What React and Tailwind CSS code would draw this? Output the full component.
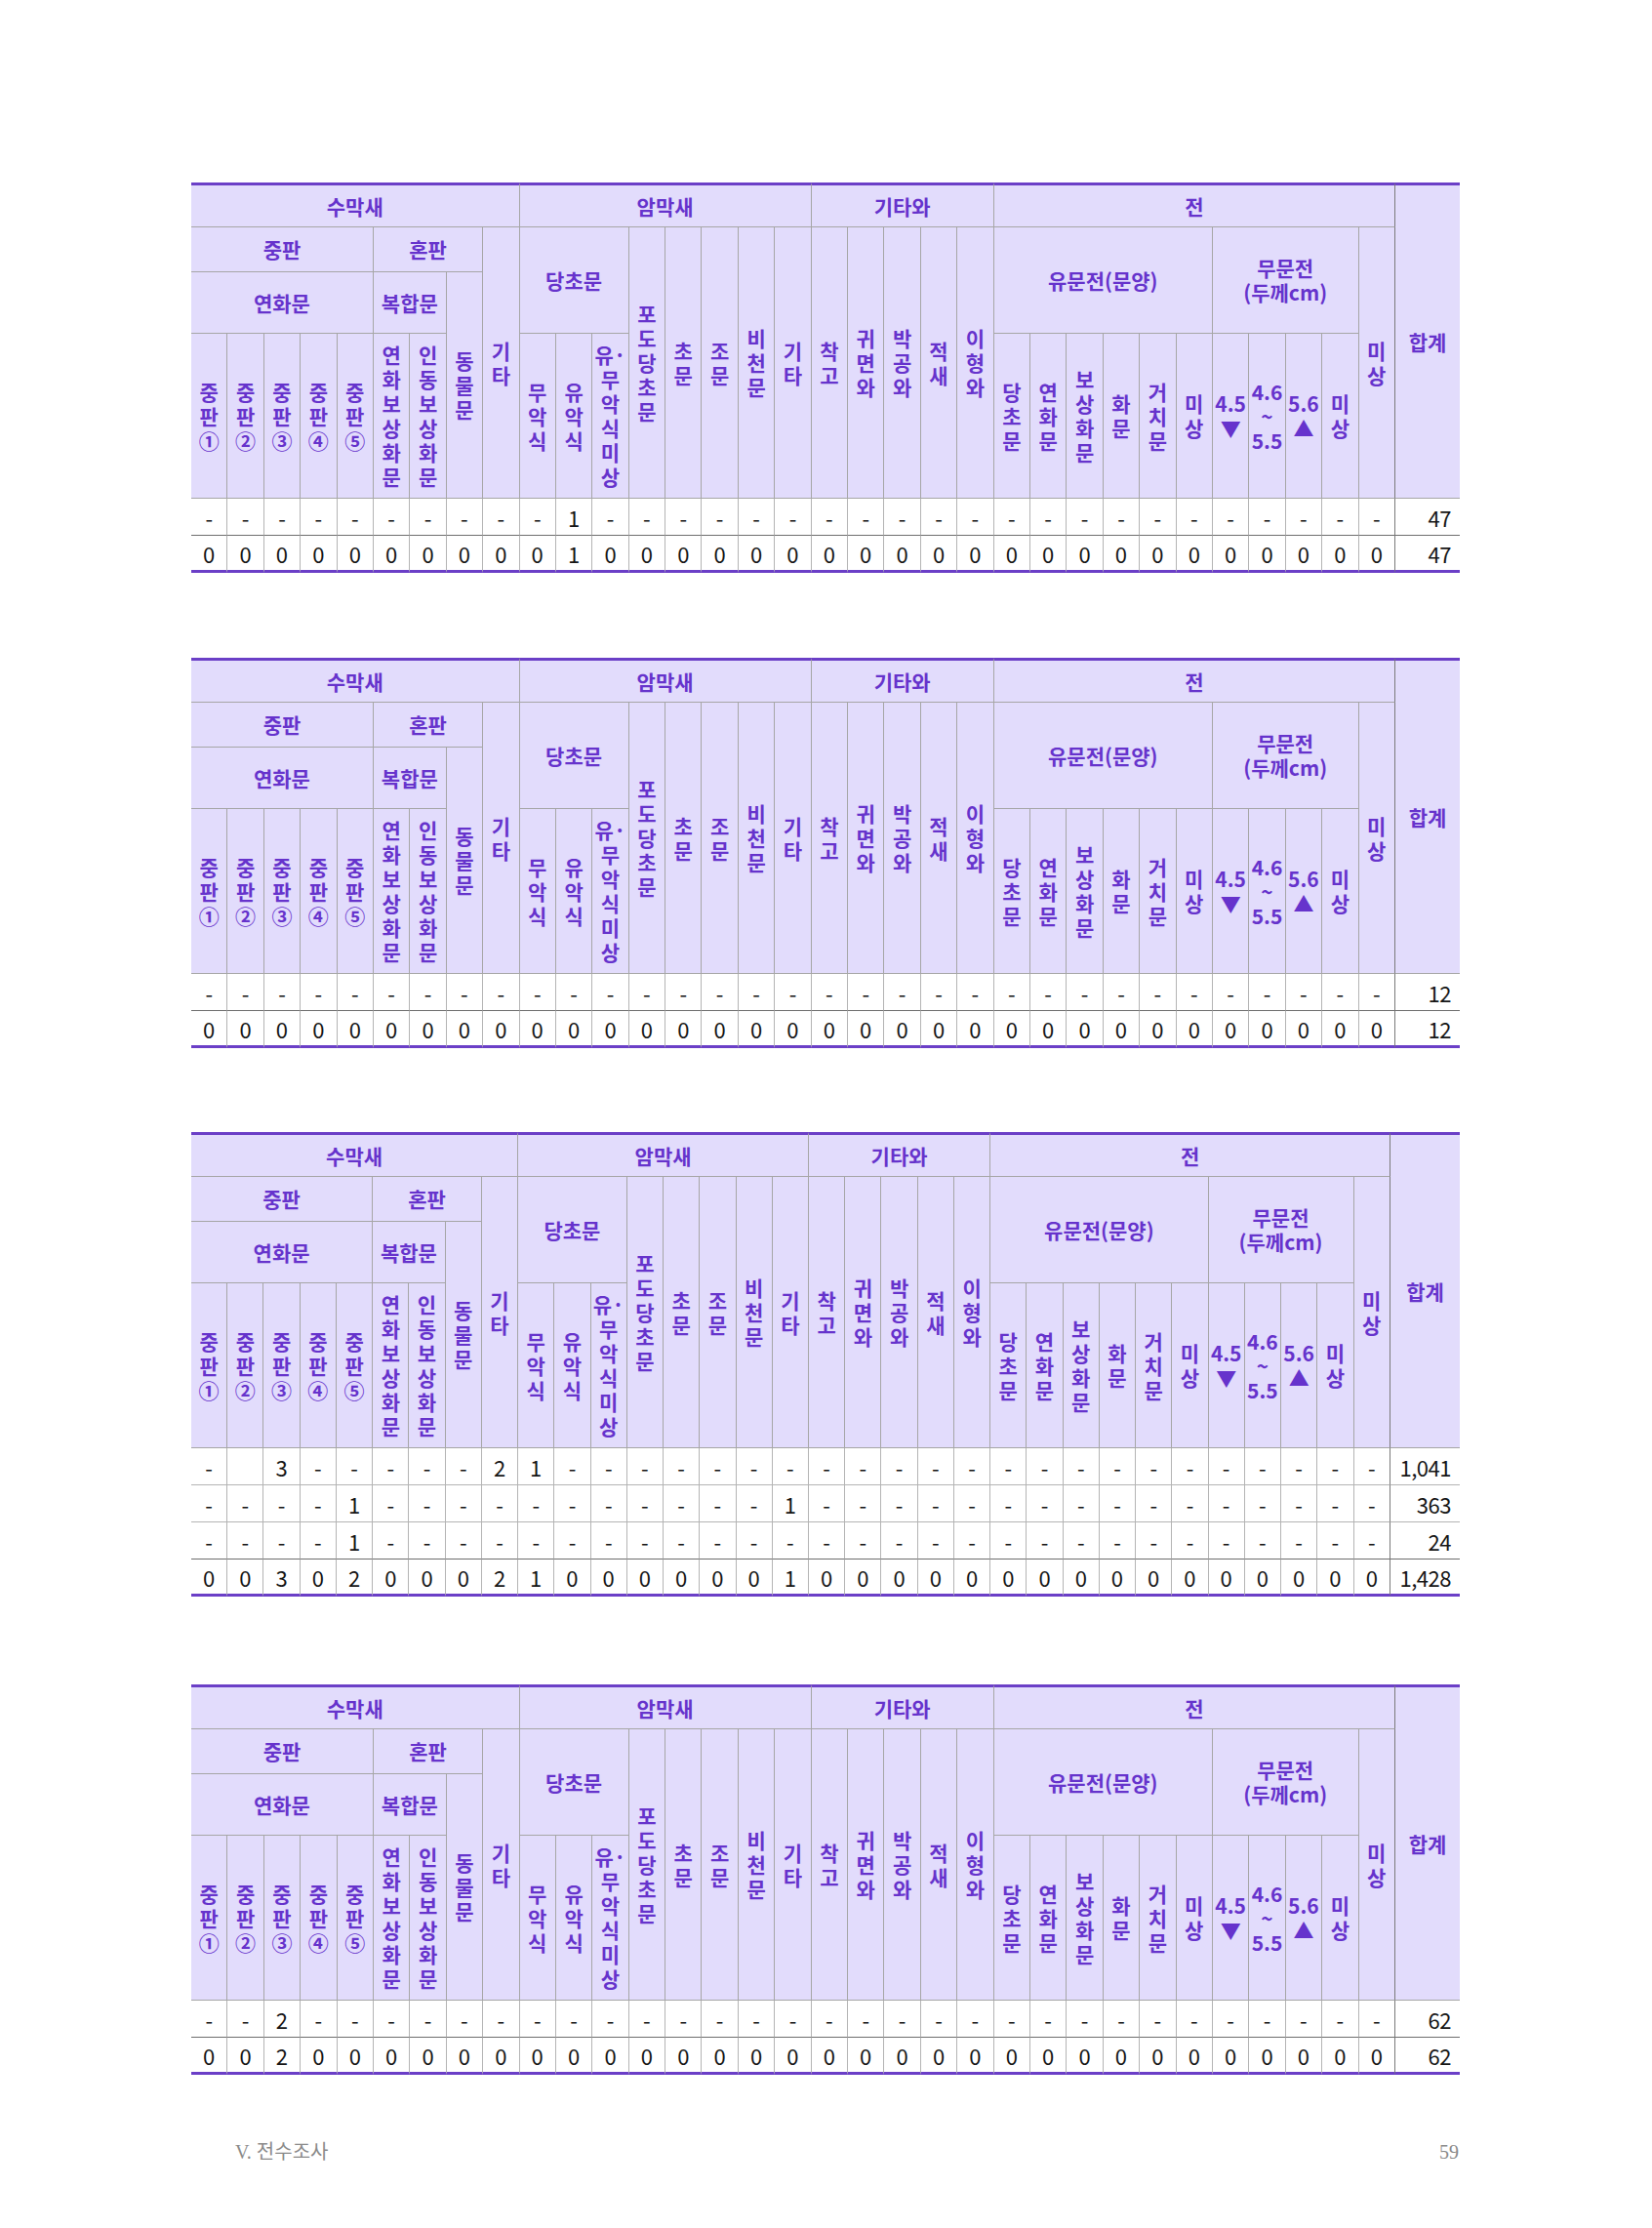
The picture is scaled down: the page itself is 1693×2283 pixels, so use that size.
import React from 'react';

// 기와·전 문양별 집계표 (4개 표 + 쪽번호)

const TH =
  'bg-[#e2dcfc] text-[#6633cc] font-bold text-[21px] leading-[25px] text-center align-middle p-0 border-r border-b border-[#a6a6a6] whitespace-pre-line';
const TOP = ' border-t-[3px] border-t-[#6b3fc7]';
const EDGE = ' border-r-[#7a7a7a]';

const R4 = [
  '중\n판\n①', '중\n판\n②', '중\n판\n③', '중\n판\n④', '중\n판\n⑤',
  '연\n화\n보\n상\n화\n문', '인\n동\n보\n상\n화\n문',
];
const R4B = ['무\n악\n식', '유\n악\n식', '유·\n무\n악\n식\n미\n상'];
const R4C = [
  '당\n초\n문', '연\n화\n문', '보\n상\n화\n문', '화\n문', '거\n치\n문', '미\n상',
  '4.5\n▼', '4.6\n~\n5.5', '5.6\n▲', '미\n상',
];
const AM_SIDE = ['포\n도\n당\n초\n문', '초\n문', '조\n문', '비\n천\n문', '기\n타'];
const GI_WA = ['착\n고', '귀\n면\n와', '박\n공\n와', '적\n새', '이\n형\n와'];

function makeRow(fill, over = {}) {
  return Array.from({ length: 33 }, (_, i) => (i in over ? over[i] : fill));
}

function Head() {
  return (
    <thead>
      <tr className="h-[46px]">
        <th colSpan={9} className={TH + TOP}>수막새</th>
        <th colSpan={8} className={TH + TOP}>암막새</th>
        <th colSpan={5} className={TH + TOP}>기타와</th>
        <th colSpan={11} className={TH + TOP + EDGE}>전</th>
        <th rowSpan={4} className={TH + TOP + ' border-r-0'}>합계</th>
      </tr>
      <tr className="h-[46px]">
        <th colSpan={5} className={TH}>중판</th>
        <th colSpan={3} className={TH}>혼판</th>
        <th rowSpan={3} className={TH}>{'기\n타'}</th>
        <th colSpan={3} rowSpan={2} className={TH}>당초문</th>
        {AM_SIDE.map((t, i) => (
          <th key={'a' + i} rowSpan={3} className={TH}>{t}</th>
        ))}
        {GI_WA.map((t, i) => (
          <th key={'g' + i} rowSpan={3} className={TH}>{t}</th>
        ))}
        <th colSpan={6} rowSpan={2} className={TH}>유문전(문양)</th>
        <th colSpan={4} rowSpan={2} className={TH}>{'무문전\n(두께cm)'}</th>
        <th rowSpan={3} className={TH + EDGE}>{'미\n상'}</th>
      </tr>
      <tr className="h-[63px]">
        <th colSpan={5} className={TH}>연화문</th>
        <th colSpan={2} className={TH}>복합문</th>
        <th rowSpan={2} className={TH}>{'동\n물\n문'}</th>
      </tr>
      <tr className="h-[169px]">
        {R4.map((t, i) => (
          <th key={'r' + i} className={TH}>{t}</th>
        ))}
        {R4B.map((t, i) => (
          <th key={'b' + i} className={TH}>{t}</th>
        ))}
        {R4C.map((t, i) => (
          <th key={'c' + i} className={TH}>{t}</th>
        ))}
      </tr>
    </thead>
  );
}

function SurveyTable({ rows, sumW, className = '' }) {
  return (
    <table className={'w-[1300px] table-fixed border-separate border-spacing-0 ' + className}>
      <colgroup>
        {Array.from({ length: 33 }).map((_, i) => (
          <col key={i} />
        ))}
        <col className={sumW} />
      </colgroup>
      <Head />
      <tbody>
        {rows.map((r, ri) => {
          const last = ri === rows.length - 1;
          const beforeLast = ri === rows.length - 2;
          const bottom = last
            ? ' border-b-[3px] border-b-[#6b3fc7]'
            : beforeLast
              ? ' border-b-[#6e6e6e]'
              : ' border-b-[#b4b4b4]';
          return (
            <tr key={ri} className="h-[38px]">
              {r.cells.map((v, ci) => (
                <td
                  key={ci}
                  className={
                    'p-0 text-center align-middle text-[22px] leading-none text-[#161616] border-r border-b border-[#b4b4b4]' +
                    bottom +
                    (ci === 32 ? ' border-r-[#7a7a7a]' : '')
                  }
                >
                  {v}
                </td>
              ))}
              <td
                className={
                  'p-0 pr-[9px] text-right align-middle text-[22px] leading-none text-[#161616] tracking-[-0.5px] border-b border-[#b4b4b4]' +
                  bottom
                }
              >
                {r.sum}
              </td>
            </tr>
          );
        })}
      </tbody>
    </table>
  );
}

const TABLES = [
  {
    sumW: 'w-[66px]',
    gap: '',
    rows: [
      { cells: makeRow('-', { 10: '1' }), sum: '47' },
      { cells: makeRow('0', { 10: '1' }), sum: '47' },
    ],
  },
  {
    sumW: 'w-[66px]',
    gap: 'mt-[87px]',
    rows: [
      { cells: makeRow('-'), sum: '12' },
      { cells: makeRow('0'), sum: '12' },
    ],
  },
  {
    sumW: 'w-[71px]',
    gap: 'mt-[86px]',
    rows: [
      { cells: makeRow('-', { 1: '', 2: '3', 8: '2', 9: '1' }), sum: '1,041' },
      { cells: makeRow('-', { 4: '1', 16: '1' }), sum: '363' },
      { cells: makeRow('-', { 4: '1' }), sum: '24' },
      { cells: makeRow('0', { 2: '3', 4: '2', 8: '2', 9: '1', 16: '1' }), sum: '1,428' },
    ],
  },
  {
    sumW: 'w-[66px]',
    gap: 'mt-[90px]',
    rows: [
      { cells: makeRow('-', { 2: '2' }), sum: '62' },
      { cells: makeRow('0', { 2: '2' }), sum: '62' },
    ],
  },
];

export default function App() {
  return (
    <div className="w-[1693px] min-h-[2283px] bg-white pt-[187px] pl-[196px] font-['Noto_Sans_CJK_KR',sans-serif]">
      <div className="flex flex-col w-[1300px]">
        {TABLES.map((t, i) => (
          <SurveyTable key={i} rows={t.rows} sumW={t.sumW} className={t.gap} />
        ))}
      </div>

      <div className="mt-[64px] ml-[45px] w-[1254px] flex justify-between items-center text-[20px] text-[#8a8a8a] font-['Liberation_Serif','Noto_Sans_CJK_KR',serif]">
        <span>V. 전수조사</span>
        <span>59</span>
      </div>
    </div>
  );
}
